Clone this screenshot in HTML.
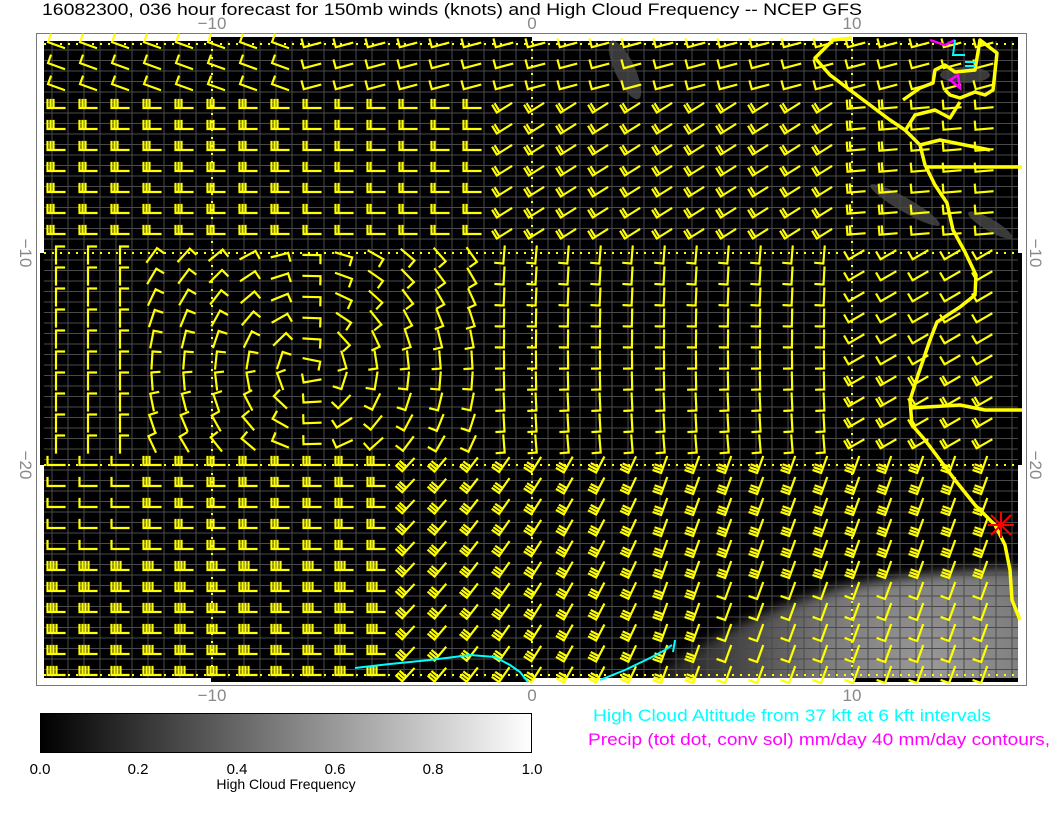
<!DOCTYPE html>
<html><head><meta charset="utf-8"><style>
html,body{margin:0;padding:0;background:#fff;width:1056px;height:816px;overflow:hidden}
svg{display:block}
text{font-family:"Liberation Sans",sans-serif}
</style></head><body>
<svg id="s" width="1056" height="816" xmlns="http://www.w3.org/2000/svg">
<defs>
<linearGradient id="cb" x1="0" x2="1" y1="0" y2="0"><stop offset="0" stop-color="#000"/><stop offset="1" stop-color="#fff"/></linearGradient>
<radialGradient id="cl" gradientUnits="userSpaceOnUse" cx="930" cy="670" r="330"><stop offset="0" stop-color="#9a9a9a"/><stop offset="0.3" stop-color="#7e7e7e"/><stop offset="0.6" stop-color="#444"/><stop offset="0.85" stop-color="#1c1c1c"/><stop offset="1" stop-color="#000"/></radialGradient>
<filter id="bl"><feGaussianBlur stdDeviation="6"/></filter>
</defs>
<text x="42" y="15" font-size="17" textLength="820" lengthAdjust="spacingAndGlyphs">16082300, 036 hour forecast for 150mb winds (knots) and High Cloud Frequency -- NCEP GFS</text>
<g fill="#888" font-size="17" text-anchor="middle">
<text x="212" y="29">−10</text><text x="532" y="29">0</text><text x="852" y="29">10</text>
<text x="212" y="701">−10</text><text x="532" y="701">0</text><text x="852" y="701">10</text>
<text transform="translate(20,253) rotate(90)">−10</text>
<text transform="translate(20,465) rotate(90)">−20</text>
<text transform="translate(1030,253) rotate(90)">−10</text>
<text transform="translate(1030,465) rotate(90)">−20</text>
</g>
<rect x="36.5" y="33.5" width="990" height="652" fill="#fff" stroke="#777"/>
<rect x="40" y="37" width="982" height="645" fill="#000"/>
<g fill="#fff">
<rect x="40" y="37" width="171" height="4"/><rect x="532" y="37" width="321" height="4"/>
<rect x="40" y="678" width="171" height="4"/><rect x="532" y="678" width="321" height="4"/>
<rect x="40" y="37" width="4" height="216"/><rect x="40" y="465" width="4" height="217"/>
<rect x="1018" y="37" width="4" height="216"/><rect x="1018" y="465" width="4" height="217"/>
</g>
<rect x="44" y="41" width="974" height="637" fill="#000"/>
<svg x="44" y="41" width="974" height="637" viewBox="44 41 974 637">
<path d="M620 700 C690 645 760 610 840 588 C900 576 960 570 1030 568 L1030 700 Z" fill="url(#cl)" filter="url(#bl)"/>
</svg>
<g fill="#3a3a3a"><ellipse cx="625" cy="70" rx="10" ry="32" transform="rotate(-25 625 70)"/><ellipse cx="905" cy="205" rx="40" ry="7" transform="rotate(30 905 205)"/><ellipse cx="990" cy="225" rx="25" ry="6" transform="rotate(30 990 225)"/><ellipse cx="965" cy="75" rx="25" ry="8"/></g>
<g id="grid" stroke="#4a4a4a" stroke-width="1"></g>
<g stroke="#ff0" stroke-width="2" stroke-dasharray="2,6" fill="none">
<path d="M44 44H1018M44 253H1018M44 465H1018M44 675H1018M212 41V678M532 41V678M852 41V678"/>
</g>
<g id="barbs" stroke="#ff0" stroke-width="2.2" fill="none" stroke-linecap="square"></g>
<g stroke="#ff0" stroke-width="3.5" fill="none" stroke-linejoin="round">
<path d="M852 38 L833 40 L815 58 L830 75 L850 90 L870 105 L890 120 L905 130 L920 145 L925 165 L935 185 L947 203 L953 230 L965 252 L976 275 L975 295 L960 307 L937 322 L930 340 L918 375 L910 400 L912 425 L925 440 L940 460 L955 480 L975 505 L995 525 L1005 545 L1010 570 L1012 600 L1020 620"/>
<path d="M925 167 L1022 167"/>
<path d="M910 408 L960 405 L985 410 L1022 410"/>
<path d="M903 100 L920 88 L933 83 L935 70 L945 65 L955 72 L975 70 L980 40 L997 53 L993 90 L985 95 L975 92 L960 98 L950 95 L945 90"/>
<path d="M905 131 L915 115 L935 110 L950 118 L960 102"/>
<path d="M920 145 L940 140 L965 145 L990 150"/>
</g>
<g stroke="#f0f" stroke-width="2.5" fill="none"><path d="M930 40 L945 45 L955 40"/><path d="M950 80 L958 75 L960 88 Z"/></g>
<g stroke="#0ff" stroke-width="2" fill="none">
<path d="M355 668 L390 664 L430 660 L470 655 L495 657 L510 665 L520 672 L528 682"/>
<path d="M600 680 L625 670 L650 658 L665 650 L672 645 M675 640 L673 652"/>
<path d="M955 40 L953 55 L965 55"/><path d="M965 62 H975 M965 66 H975"/>
</g>
<g stroke="#f00" stroke-width="2"><path d="M988 525 H1014 M1001 512 V538 M991 515 L1011 535 M1011 515 L991 535"/></g>
<rect x="40.5" y="713.5" width="491" height="39" fill="url(#cb)" stroke="#000"/>
<g font-size="15" text-anchor="middle">
<text x="40" y="774">0.0</text><text x="138" y="774">0.2</text><text x="237" y="774">0.4</text><text x="335" y="774">0.6</text><text x="433" y="774">0.8</text><text x="532" y="774">1.0</text>
<text x="286" y="789" font-size="14">High Cloud Frequency</text>
</g>
<text x="593" y="721" font-size="17" fill="#0ff" textLength="398" lengthAdjust="spacingAndGlyphs">High Cloud Altitude from 37 kft at 6 kft intervals</text>
<text x="588" y="745" font-size="17" fill="#f0f" textLength="462" lengthAdjust="spacingAndGlyphs">Precip (tot dot, conv sol) mm/day 40 mm/day contours,</text>
</svg>
<script>
(function(){
var NS="http://www.w3.org/2000/svg";
var g=document.getElementById("grid"),d="";
for(var x=52;x<1018;x+=16)d+="M"+x+" 41V678";
for(var y=50;y<678;y+=10.5)d+="M44 "+y.toFixed(1)+"H1018";
var p=document.createElementNS(NS,"path");p.setAttribute("d",d);g.appendChild(p);
function field(x,y){
 var a,n;
 if(y<95){a=(x<300?200:165);n=1;}
 else if(y<250){
  if(x<500){a=180;n=x<300?3:2;}
  else if(x<850){a=148;n=2;}
  else{a=175;n=x>900?1:2;}
 } else if(y<460){
  if(x<500){var rx=x-310,ry=y-370;a=Math.atan2(rx,-ry)*180/Math.PI;n=1; if(x<130)a=-90;}
  else if(x<850){a=95-(y-250)*0.05;n=1;}
  else{a=150;n=y>380?2:1;}
 } else {
  if(x<380){a=180;n=y>560?4:(x<150?1:3);}
  else if(x<650){a=135-(x-380)*0.08;n=3;}
  else{a=110;n=(y>590&&x>700)?1:3;}
 }
 return [a,n];
}
var bg=document.getElementById("barbs"),s="";
for(var j=0;j<31;j++){
 var cy=45+j*21;
 for(var i=0;i<30;i++){
  var cx=56+i*32,f=field(cx,cy),a=f[0]*Math.PI/180,n=f[1];
  var dx=Math.cos(a),dy=Math.sin(a),L=17;
  var sx=cx-dx*L/2,sy=cy-dy*L/2,ex=sx+dx*L,ey=sy+dy*L;
  s+="M"+sx.toFixed(1)+" "+sy.toFixed(1)+"L"+ex.toFixed(1)+" "+ey.toFixed(1);
  var bx=-dy,by=dx;
  for(var k=0;k<n;k++){
   var px=ex-dx*3*k,py=ey-dy*3*k;
   s+="M"+px.toFixed(1)+" "+py.toFixed(1)+"l"+(bx*8).toFixed(1)+" "+(by*8).toFixed(1);
  }
 }
}
var q=document.createElementNS(NS,"path");q.setAttribute("d",s);bg.appendChild(q);
})();
</script>
</body></html>
